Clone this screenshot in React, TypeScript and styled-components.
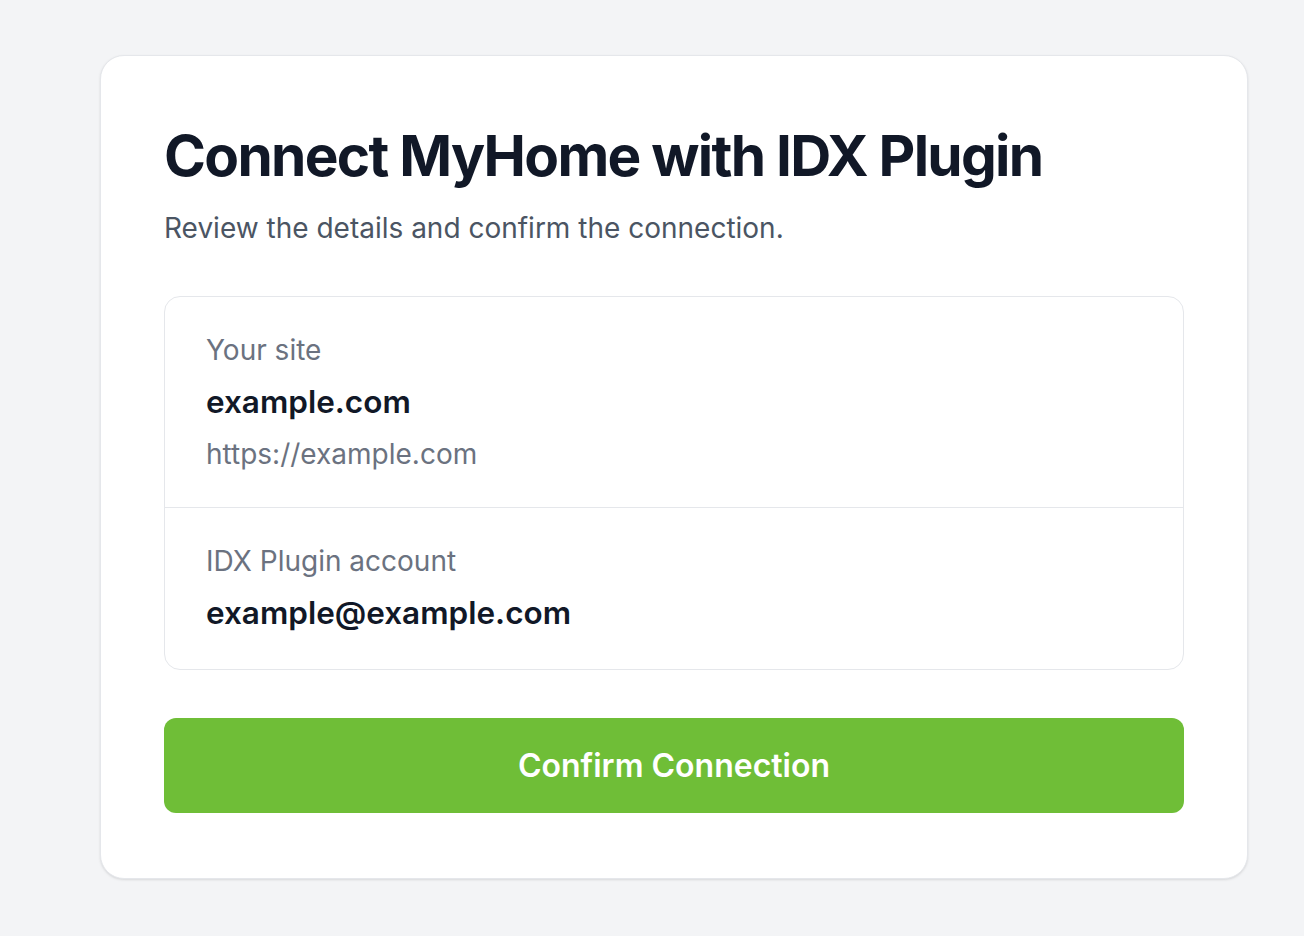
import React from "react";
import styled, { createGlobalStyle } from "styled-components";

const Global = createGlobalStyle`
  html, body { margin: 0; padding: 0; background: #f3f4f6; }
  body { font-family: Inter, "Noto Sans", sans-serif; -webkit-font-smoothing: antialiased; }
  * { box-sizing: border-box; }
`;

const Page = styled.div`
  min-height: 936px;
  padding: 55px 56px 58px 100px;
`;

const Card = styled.div`
  width: 1148px;
  background: #ffffff;
  border: 1px solid #e5e7eb;
  border-radius: 24px;
  box-shadow: 0 1px 3px rgba(0, 0, 0, 0.08), 0 1px 2px rgba(0, 0, 0, 0.04);
  padding: 64px 63px 65px 63px;
  display: flex;
  flex-direction: column;
`;

const Title = styled.h1`
  margin: 0;
  font-size: 56.75px;
  line-height: 72px;
  font-weight: 700;
  letter-spacing: -0.03em;
  color: #111827;
`;

const Subtitle = styled.p`
  margin: 16px 0 0;
  font-size: 28px;
  line-height: 40px;
  color: #4b5563;
`;

const InfoBox = styled.div`
  margin-top: 48px;
  border: 1px solid #e5e7eb;
  border-radius: 16px;
  display: flex;
  flex-direction: column;
`;

const Section = styled.div<{ $divider?: boolean }>`
  padding: ${(p) => (p.$divider ? "27px 40px 30px 41px" : "27px 40px 27px 41px")};
  border-top: ${(p) => (p.$divider ? "1px solid #e5e7eb" : "none")};
  display: flex;
  flex-direction: column;
`;

const Label = styled.div`
  font-size: 28px;
  line-height: 52px;
  color: #6b7280;
`;

const Value = styled.div`
  font-size: 31.5px;
  line-height: 52px;
  font-weight: 600;
  color: #111827;
`;

const Button = styled.button`
  margin-top: 48px;
  height: 95px;
  border: none;
  border-radius: 12px;
  background: #6fbe37;
  color: #ffffff;
  font-family: Inter, "Noto Sans", sans-serif;
  font-weight: 600;
  font-size: 32px;
  cursor: pointer;
`;

export default function App() {
  return (
    <>
      <Global />
      <Page>
        <Card>
          <Title>Connect MyHome with IDX Plugin</Title>
          <Subtitle>Review the details and confirm the connection.</Subtitle>
          <InfoBox>
            <Section>
              <Label>Your site</Label>
              <Value>example.com</Value>
              <Label>https://example.com</Label>
            </Section>
            <Section $divider>
              <Label>IDX Plugin account</Label>
              <Value>example@example.com</Value>
            </Section>
          </InfoBox>
          <Button>Confirm Connection</Button>
        </Card>
      </Page>
    </>
  );
}
